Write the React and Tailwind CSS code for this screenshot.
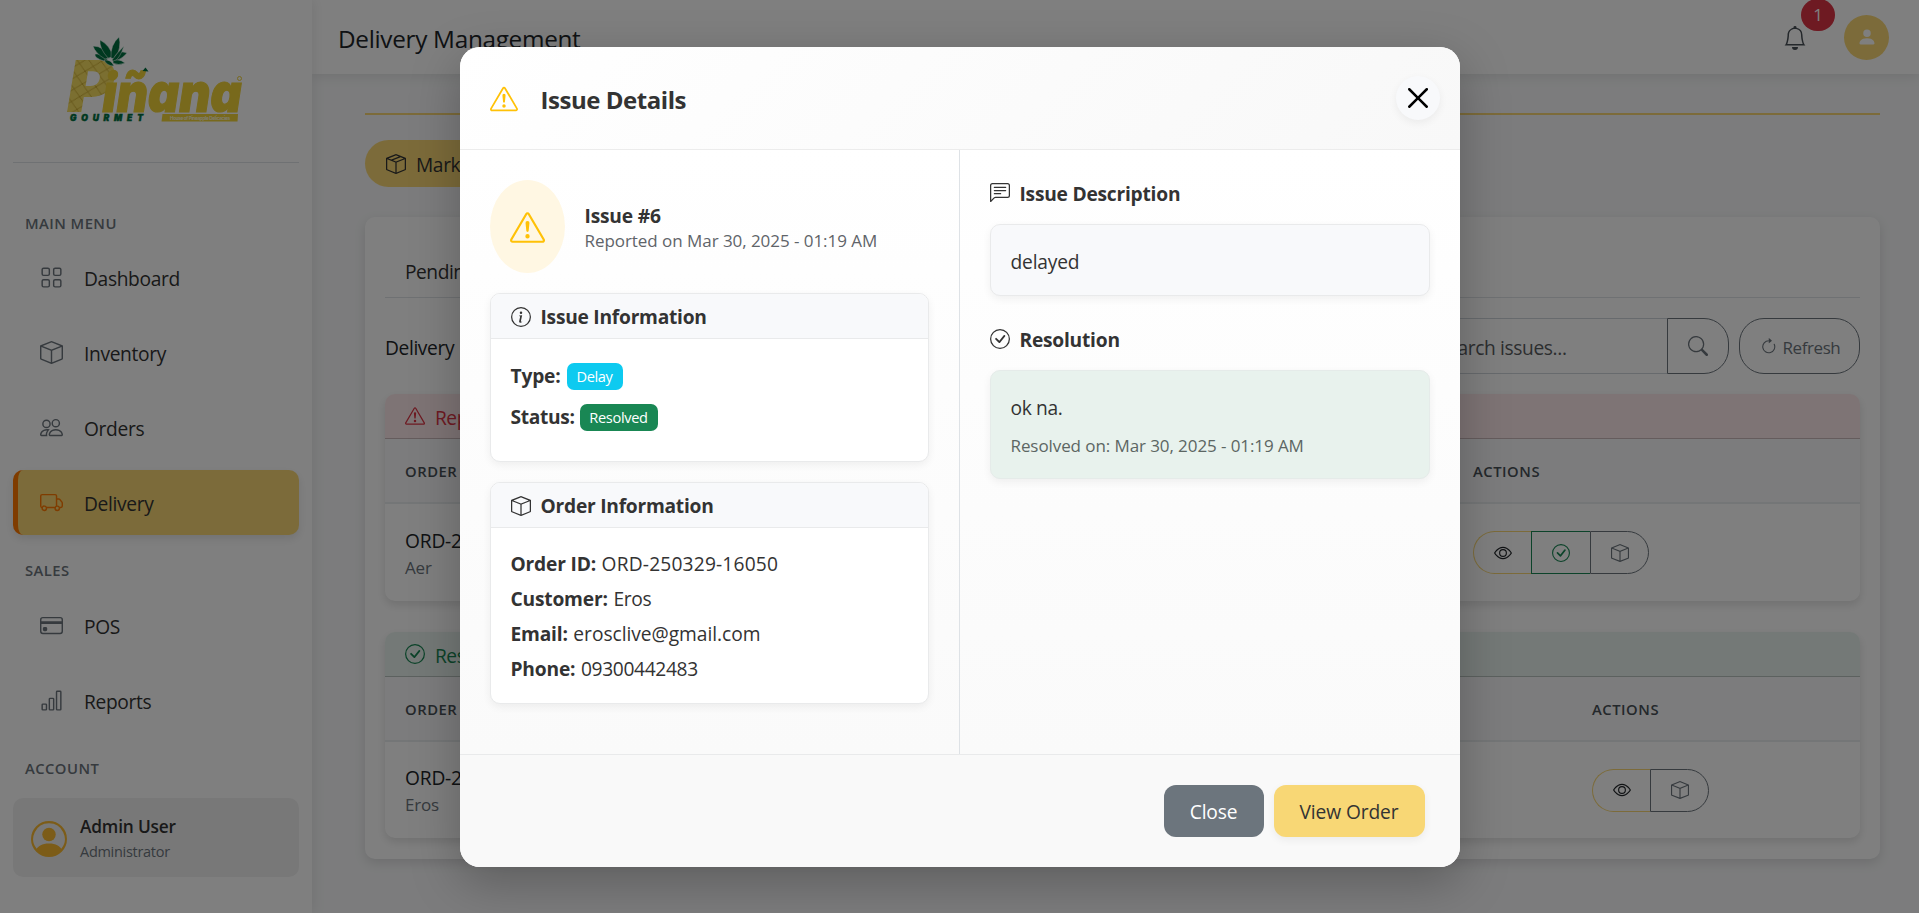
import React from "react";
import {
  BsGrid, BsBox, BsPeople, BsTruck, BsCreditCard, BsBarChart, BsPersonCircle, BsBoxSeam,
  BsExclamationTriangle, BsCheckCircle, BsBell, BsPersonFill, BsSearch, BsArrowClockwise,
  BsEye, BsInfoCircle, BsChatLeftText,
} from "react-icons/bs";

const LEAVES = [
  "M104 61 Q94 58 95 54 Q102 53 108 60 Z",
  "M105 59 Q95 53 93 46 Q104 46 110 58 Z",
  "M108 58 Q99 48 100 40 Q110 45 113 57 Z",
  "M111 58 Q110 45 119 37 Q122 47 115 59 Z",
  "M114 59 Q116 49 127 53 Q123 58 116 61 Z",
  "M112 60 Q118 52 124 46 Q120 58 114 62 Z",
  "M113 61 Q119 58 125 63 Q118 66 113 63 Z",
  "M104 60 Q111 59 114 66 Q107 66 104 60 Z",
];

function Logo() {
  return (
    <svg className="overflow-visible" width="190" height="100" viewBox="60 30 190 100">
      <defs>
        <pattern id="rind" width="14" height="13" patternUnits="userSpaceOnUse" patternTransform="rotate(12)">
          <rect width="14" height="13" fill="#f7df62" />
          <path d="M0 0L14 13M14 0L0 13" stroke="#cdae35" strokeWidth="1" />
        </pattern>
      </defs>
      <text x="67" y="112" fontSize="71" fontWeight="900" fontStyle="italic" fontFamily="Inter, sans-serif" fill="url(#rind)" textLength="47" lengthAdjust="spacingAndGlyphs">P</text>
      <g fill="#007040" stroke="#fff" strokeWidth="0.5">
        {LEAVES.map((d) => <path key={d} d={d} />)}
      </g>
      <text x="102.500" y="111.500" fontSize="54" fontWeight="900" fontStyle="italic" fontFamily="Inter, sans-serif" fill="#f0d238" stroke="#f0d238" strokeWidth="1.2" textLength="139" lengthAdjust="spacingAndGlyphs" style={{ fontFeatureSettings: '"cv11"' }}>iñana</text>
      <path d="M142.500 71L145.500 67.500L148.500 71.500Z" fill="#007040" />
      <circle cx="239.500" cy="78.500" r="2" fill="none" stroke="#f0d238" />
      <text x="70" y="120.500" fontSize="8.500" fontWeight="900" fontStyle="italic" fontFamily="Inter, sans-serif" fill="#007040" stroke="#007040" strokeWidth="0.5" textLength="73">GOURMET</text>
      <path d="M162.500 114H238L237.500 121.500H161.500Z" fill="#f0d238" />
      <text x="170" y="119.500" fontSize="4.600" fontWeight="700" fontFamily="Inter, sans-serif" fill="#fffbe0" textLength="60">House of Pineapple Delicacies</text>
    </svg>
  );
}

function NavItem({ icon: Icon, label, active }) {
  return (
    <a className={`flex h-[65px] items-center rounded-[10px] text-[19.200px] tracking-[-0.018em] ${active ? "border-l-[5px] border-[#ff7800] bg-[#f8d775] pl-[22px] shadow-[0_4px_10px_rgba(0,0,0,0.1)]" : "pl-[27px]"}`}>
      <Icon className={`size-[23px] shrink-0 ${active ? "text-[#ff7800]" : "text-[#6c757d]"}`} />
      <span className="pt-1 pl-[21px] text-[#333]">{label}</span>
    </a>
  );
}

function NavLabel({ children }) {
  return <div className="h-[25px] pl-[12px] text-[14.800px] leading-[25px] font-semibold tracking-[0.030em] text-[#6c757d]">{children}</div>;
}

function Sidebar() {
  return (
    <aside className="relative z-10 w-[312px] shrink-0 bg-white px-[13px] shadow-[2px_0_12px_rgba(0,0,0,0.08)]">
      <div className="flex h-[163px] border-b border-[#dee2e6] pt-[30px] pl-[47px]"><Logo /></div>
      <div className="mt-[48px]"><NavLabel>MAIN MENU</NavLabel></div>
      <nav className="mt-[9px] flex flex-col gap-[10px]">
        <NavItem icon={BsGrid} label="Dashboard" />
        <NavItem icon={BsBox} label="Inventory" />
        <NavItem icon={BsPeople} label="Orders" />
        <NavItem icon={BsTruck} label="Delivery" active />
      </nav>
      <div className="mt-[23px]"><NavLabel>SALES</NavLabel></div>
      <nav className="mt-[10px] flex flex-col gap-[10px]">
        <NavItem icon={BsCreditCard} label="POS" />
        <NavItem icon={BsBarChart} label="Reports" />
      </nav>
      <div className="mt-[23px]"><NavLabel>ACCOUNT</NavLabel></div>
      <div className="mt-[17px] flex h-[79px] items-center rounded-[10px] bg-[#f1f1f1] pl-[18px]">
        <BsPersonCircle className="mt-[3px] size-[36px] text-[#f8b830]" />
        <div className="pt-[2px] pl-[13px]">
          <div className="text-[17.300px] leading-[26px] font-semibold tracking-[-0.010em] text-[#333]">Admin User</div>
          <div className="text-[14.500px] leading-[23px] tracking-[-0.020em] text-[#6c757d]">Administrator</div>
        </div>
      </div>
    </aside>
  );
}

function Header() {
  return (
    <header className="relative flex h-[74px] items-center bg-white pr-[30px] pl-[26px] shadow-[0_2px_12px_rgba(0,0,0,0.1)]">
      <h1 className="pt-[5px] text-[24.300px] tracking-[-0.012em] text-[#212529]">Delivery Management</h1>
      <div className="relative mt-[2px] mr-[37px] ml-auto">
        <BsBell className="size-[24px] text-[#495057]" />
        <span className="absolute top-[-27px] left-[18px] flex h-[32px] w-[34px] items-center justify-center rounded-full bg-[#dc3545] text-[17px] text-white">1</span>
      </div>
      <span className="flex size-[45px] items-center justify-center rounded-full bg-[#f8d775]"><BsPersonFill className="size-[20px] text-white" /></span>
    </header>
  );
}

function ActionButtons({ resolve }) {
  return (
    <div className="flex h-[43px]">
      <span className="flex w-[58px] items-center justify-center rounded-l-[22px] border border-r-0 border-[#f8d775]"><BsEye className="size-[18px] text-[#212529]" /></span>
      {resolve && <span className="flex w-[59px] items-center justify-center border border-r-0 border-[#198754]"><BsCheckCircle className="size-[18px] text-[#198754]" /></span>}
      <span className="flex w-[59px] items-center justify-center rounded-r-[22px] border border-[#6c757d]"><BsBox className="size-[18px] text-[#6c757d]" /></span>
    </div>
  );
}

function IssueTable({ icon: Icon, title, tone, name, resolve, colClass, rowClass }) {
  return (
    <section className="overflow-hidden rounded-[10px] bg-white shadow-[0_4px_10px_rgba(0,0,0,0.12)]">
      <div className={`flex h-[45px] items-center border-b border-black/20 pl-[20px] text-[19.200px] tracking-[-0.025em] ${tone}`}>
        <Icon className="size-[20px]" />
        <span className="pt-[4px] pl-[10px]">{title}</span>
      </div>
      <div className="flex h-[65px] items-center border-b-2 border-[#e9ecef] bg-[#f8f9fa] pt-px pl-[20px] text-[14.800px] font-semibold tracking-[0.035em] text-[#495057]">
        <span className={colClass}>ORDER</span>
        <span>ACTIONS</span>
      </div>
      <div className={`flex items-center pl-[20px] ${rowClass}`}>
        <div className={`pt-px ${colClass}`}>
          <div className="text-[19.200px] leading-[29px] tracking-[-0.01em] text-[#212529]">ORD-250329</div>
          <div className="text-[17px] leading-[26px] tracking-[-0.01em] text-[#6c757d]">{name}</div>
        </div>
        <ActionButtons resolve={resolve} />
      </div>
    </section>
  );
}

function Content() {
  return (
    <main className="pt-[39px] pr-[39px] pl-[53px]">
      <div className="h-[2px] bg-[#f8d775]" />
      <button className="mt-[25px] flex h-[47px] w-[180px] items-center rounded-full bg-[#f8d775] pl-[21px] text-[19.200px] tracking-[-0.02em] text-[#333]">
        <BsBoxSeam className="size-[20px]" /><span className="pt-[3px] pl-[10px]">Mark</span>
      </button>
      <div className="mt-[30px] h-[642px] rounded-[10px] bg-white px-[20px] shadow-[0_4px_12px_rgba(0,0,0,0.12)]">
        <div className="flex h-[81px] border-b border-[#dee2e6] pt-[40px] pl-[20px] text-[19.200px] leading-[30px] tracking-[-0.025em] text-[#333]">Pending</div>
        <div className="mt-[20px] flex h-[56px] items-center text-[19.200px] tracking-[-0.02em]">
          <span className="pt-1 text-[#212529]">Delivery</span>
          <div className="ml-auto flex h-[56px]">
            <div className="flex w-[240px] items-center rounded-l-[25px] border border-r-0 border-[#ced4da] pt-1 pl-[9px] text-[#595c5f]">Search issues...</div>
            <span className="flex w-[62px] items-center justify-center rounded-r-[25px] border border-[#6c757d]"><BsSearch className="size-[20px] text-[#6c757d]" /></span>
          </div>
          <span className="ml-[10px] flex h-[56px] w-[121px] items-center rounded-[25px] border border-[#6c757d] pl-[20px] text-[#6c757d]">
            <BsArrowClockwise className="mt-px size-[17.500px]" /><span className="pt-[3px] pl-[5px] text-[17px] tracking-[-0.025em]">Refresh</span>
          </span>
        </div>
        <div className="flex flex-col gap-[31px] pt-[20px]">
          <IssueTable icon={BsExclamationTriangle} title="Reported" tone="bg-[#fde8ea] text-[#dc3545]" name="Aer" resolve colClass="w-[1068px]" rowClass="h-[97px]" />
          <IssueTable icon={BsCheckCircle} title="Resolved" tone="bg-[#e8f3ee] text-[#198754]" name="Eros" colClass="w-[1187px]" rowClass="h-[96px]" />
        </div>
      </div>
    </main>
  );
}

function CloseGlyph() {
  return (
    <svg className="size-[20px]" viewBox="0 0 16 16" fill="#000">
      <path d="M.293.293a1 1 0 0 1 1.414 0L8 6.586 14.293.293a1 1 0 1 1 1.414 1.414L9.414 8l6.293 6.293a1 1 0 0 1-1.414 1.414L8 9.414l-6.293 6.293a1 1 0 0 1-1.414-1.414L6.586 8 .293 1.707a1 1 0 0 1 0-1.414z" />
    </svg>
  );
}

function InfoCard({ icon: Icon, title, className, children }) {
  return (
    <section className={`overflow-hidden rounded-[10px] border border-[#e9eaeb] bg-white shadow-[0_3px_8px_rgba(0,0,0,0.06)] ${className}`}>
      <div className="flex h-[45px] items-center border-b border-[#e9eaeb] bg-[#f8f9fb] pl-[20px]">
        <Icon className="mt-px size-[20px]" />
        <h3 className="pt-[3px] pl-[10px] text-[19.200px] font-bold tracking-[-0.013em]">{title}</h3>
      </div>
      {children}
    </section>
  );
}

function Field({ label, className, children }) {
  return <p className="leading-[30px]"><strong className="font-bold tracking-[-0.010em]">{label}:</strong> <span className={`ml-px ${className ?? ""}`}>{children}</span></p>;
}

function IssueModal() {
  return (
    <div className="flex h-[820px] w-[1000px] flex-col overflow-hidden rounded-[20px] bg-white text-[19.200px] tracking-[-0.018em] text-[#333] shadow-[0_15px_50px_rgba(0,0,0,0.25)]">
      <header className="flex h-[103px] items-center border-b border-[#ececec] bg-linear-135 from-white to-[#f8f8f8] pr-[20px] pl-[30px]">
        <BsExclamationTriangle className="mt-[2px] size-[28px] text-[#ffc107]" />
        <h2 className="pt-[3px] pl-[23px] text-[24px] font-bold tracking-[-0.019em]">Issue Details</h2>
        <button className="ml-auto flex size-[44px] items-center justify-center rounded-full bg-[#f8f9fb] shadow-[0_3px_8px_rgba(0,0,0,0.06)]"><CloseGlyph /></button>
      </header>
      <div className="flex h-[604px] bg-linear-to-b from-white to-[#fafafa]">
        <div className="w-[500px] border-r border-[#dee2e6] p-[30px]">
          <div className="flex h-[93px] items-center">
            <span className="flex h-[93px] w-[75px] items-center justify-center rounded-[50%] bg-[#fff7e3]"><BsExclamationTriangle className="mt-[2px] size-[35px] text-[#ffc107]" /></span>
            <div className="pt-[2px] pl-[20px]">
              <h3 className="text-[19.200px] leading-[25px] font-bold tracking-[-0.01em]">Issue #6</h3>
              <p className="text-[17px] leading-[25px] tracking-[-0.003em] text-[#5f6469]">Reported on Mar 30, 2025 - 01:19 AM</p>
            </div>
          </div>
          <InfoCard icon={BsInfoCircle} title="Issue Information" className="mt-[20px] h-[169px]">
            <div className="flex flex-col gap-[14px] pt-[24px] pl-[20px]">
              <div className="flex h-[27px] items-center gap-[6px]"><strong className="w-[50px] font-bold tracking-[-0.010em]">Type:</strong><span className="flex h-[27px] w-[56px] items-center justify-center rounded-[7px] bg-[#0dcaf0] pt-px text-[14.600px] text-white">Delay</span></div>
              <div className="flex h-[27px] items-center gap-[6px]"><strong className="w-[63px] font-bold">Status:</strong><span className="flex h-[27px] w-[78px] items-center justify-center rounded-[7px] bg-[#198754] pt-px text-[14.600px] text-white">Resolved</span></div>
            </div>
          </InfoCard>
          <InfoCard icon={BsBox} title="Order Information" className="mt-[20px] h-[222px]">
            <div className="flex flex-col gap-[5px] pt-[21px] pl-[20px]">
              <Field label="Order ID" className="tracking-[0.009em]">ORD-250329-16050</Field>
              <Field label="Customer">Eros</Field>
              <Field label="Email" className="tracking-[-0.002em]">erosclive@gmail.com</Field>
              <Field label="Phone">09300442483</Field>
            </div>
          </InfoCard>
        </div>
        <div className="w-[500px] p-[30px]">
          <div className="flex h-[24px]">
            <BsChatLeftText className="mt-[3px] size-[20px]" />
            <h3 className="pt-[2px] pl-[10px] leading-[24px] font-bold tracking-[-0.012em]">Issue Description</h3>
          </div>
          <div className="mt-[20px] h-[72px] rounded-[10px] border border-[#e9eaeb] bg-[#f8f9fb] pt-[22px] pl-[20px] leading-[30px] tracking-[-0.01em] shadow-[0_3px_8px_rgba(0,0,0,0.06)]">delayed</div>
          <div className="mt-[30px] flex h-[24px]">
            <BsCheckCircle className="mt-[3px] size-[20px]" />
            <h3 className="pt-[2px] pl-[10px] leading-[24px] font-bold tracking-[-0.012em]">Resolution</h3>
          </div>
          <div className="mt-[20px] h-[109px] rounded-[10px] border border-[#e5ebe9] bg-[#e8f2ed] pt-[22px] pl-[20px] leading-[30px] shadow-[0_3px_8px_rgba(0,0,0,0.06)]">
            <p>ok na.</p>
            <p className="pt-[10px] text-[17px] leading-[26px] tracking-[-0.005em] text-[#5c6663]">Resolved on: Mar 30, 2025 - 01:19 AM</p>
          </div>
        </div>
      </div>
      <footer className="flex grow items-center justify-end gap-[10px] border-t border-[#e9eaeb] bg-[#f9f9f9] pr-[35px]">
        <button className="h-[52px] w-[100px] rounded-[12px] bg-[#6c757d] pt-0.5 tracking-[-0.01em] text-white">Close</button>
        <button className="h-[52px] w-[151px] rounded-[12px] bg-[#f8d775] pt-0.5 tracking-[-0.005em] shadow-[0_3px_8px_rgba(0,0,0,0.06)]">View Order</button>
      </footer>
    </div>
  );
}

export default function App() {
  return (
    <div className="relative h-screen overflow-hidden bg-[#f8f9fa] font-['Open_Sans','Noto_Sans',sans-serif]">
      <div className="flex h-full">
        <Sidebar />
        <div className="min-w-0 grow"><Header /><Content /></div>
      </div>
      <div className="absolute inset-0 z-20 flex items-start justify-center bg-black/50 pt-[47px]">
        <IssueModal />
      </div>
    </div>
  );
}
